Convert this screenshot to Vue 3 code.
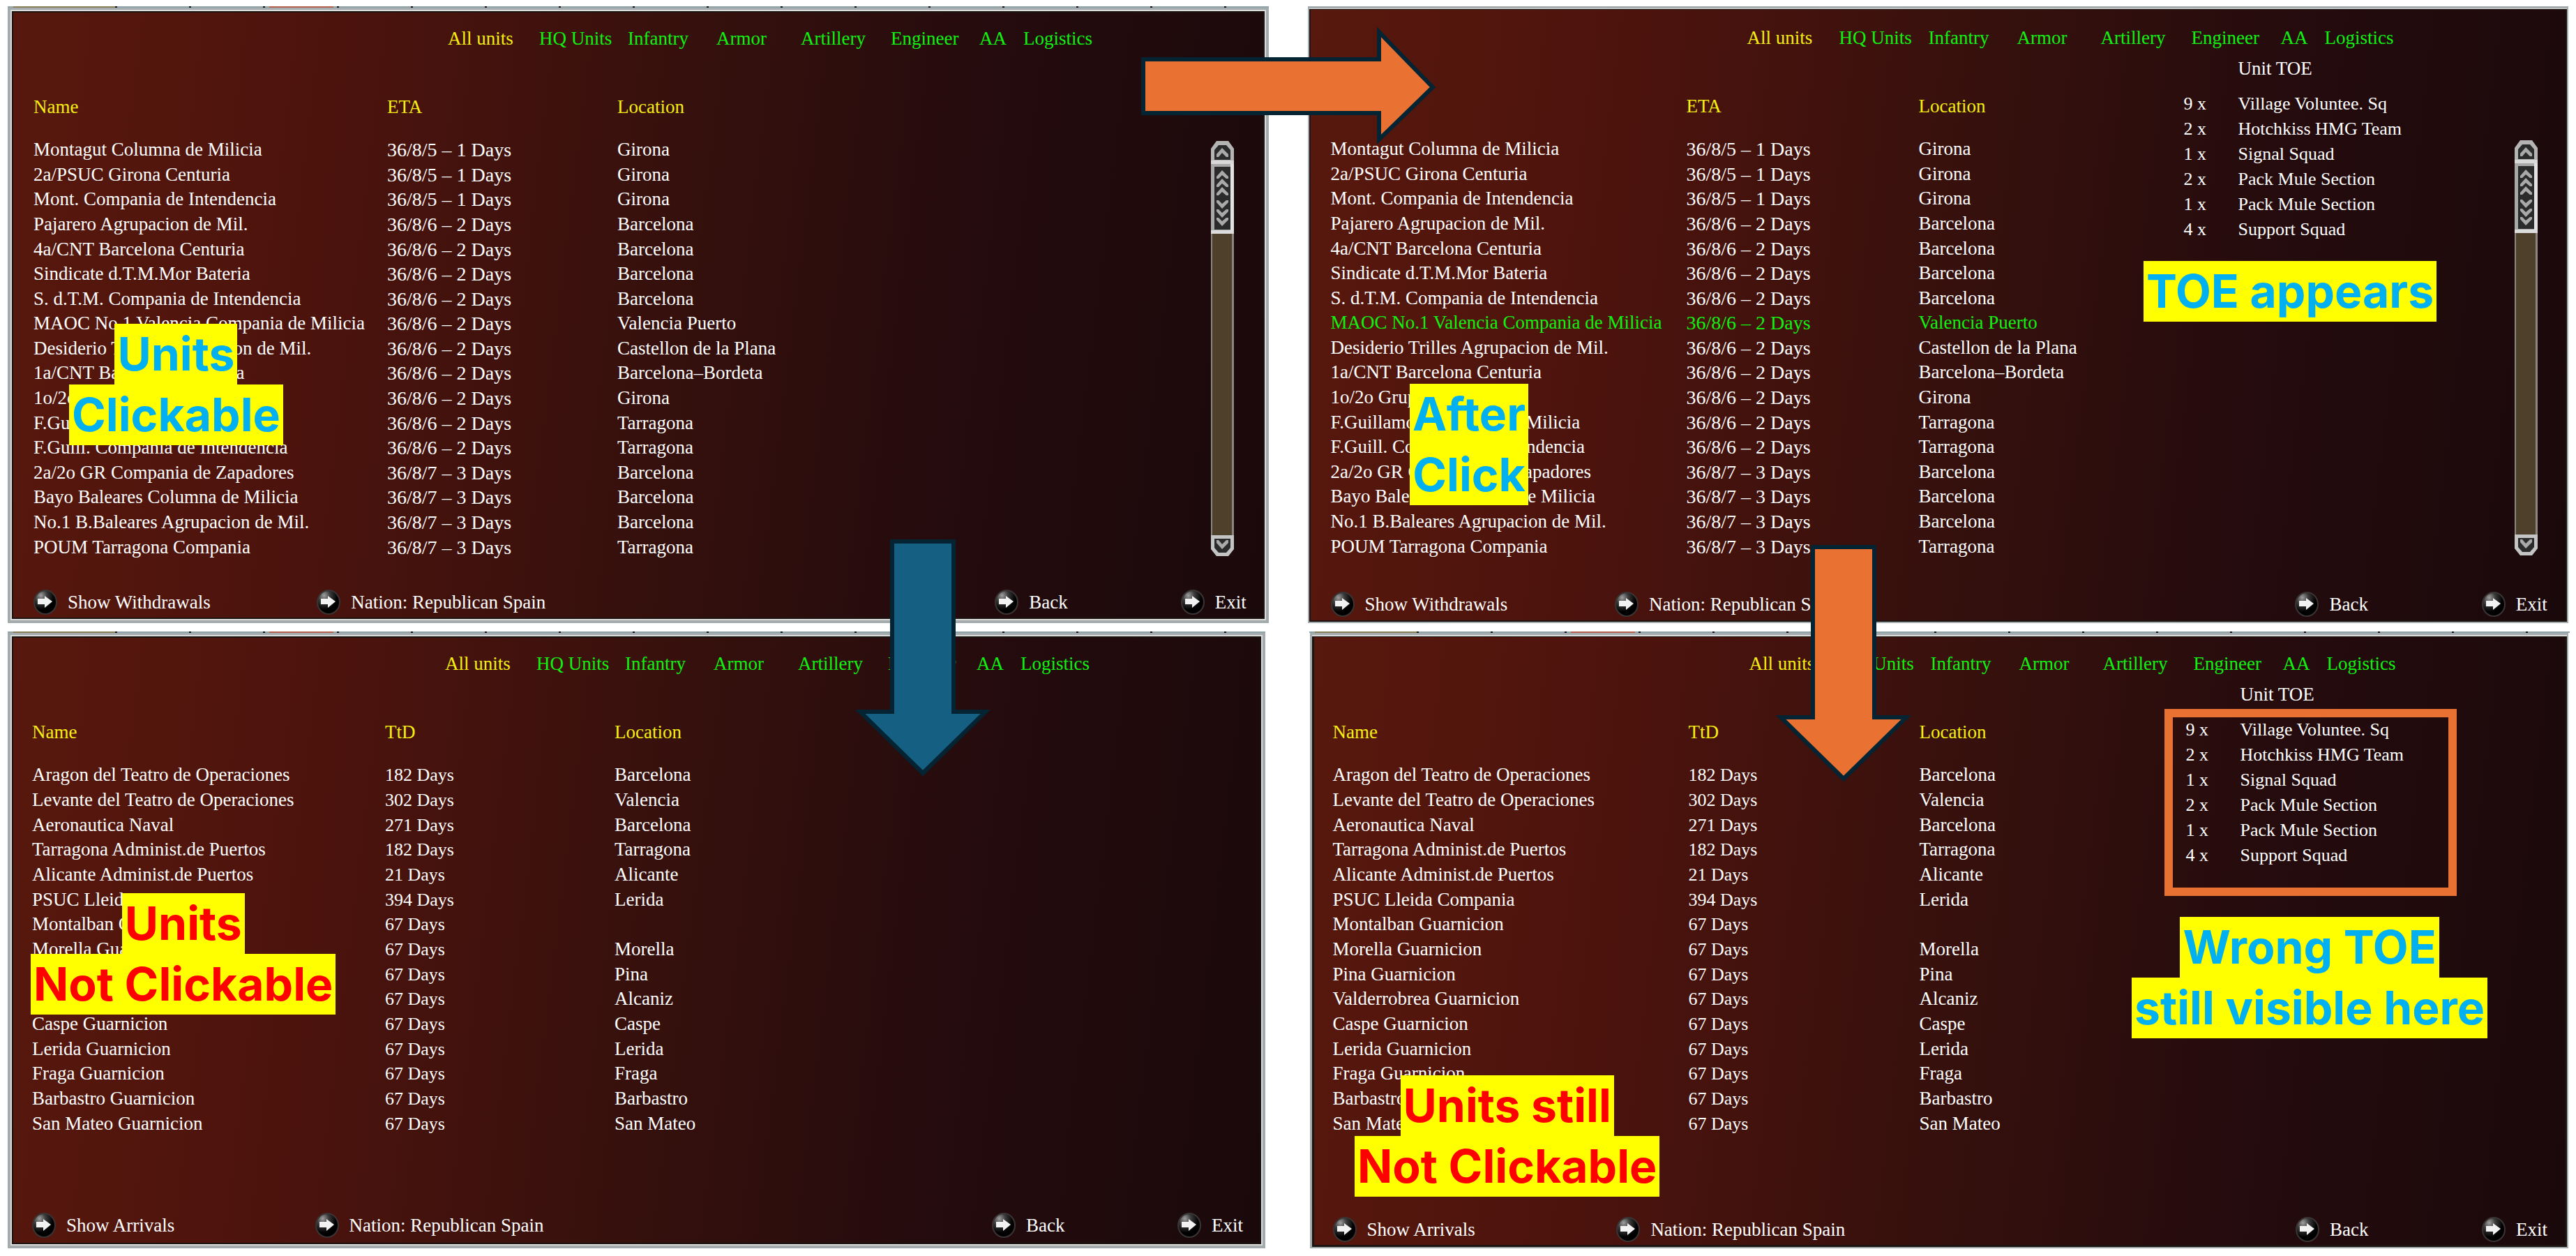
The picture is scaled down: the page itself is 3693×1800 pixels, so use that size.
<script setup>
const tabs = ['All units', 'HQ Units', 'Infantry', 'Armor', 'Artillery', 'Engineer', 'AA', 'Logistics']

const arrivals = [
  ['Montagut Columna de Milicia', '36/8/5 – 1 Days', 'Girona'],
  ['2a/PSUC Girona Centuria', '36/8/5 – 1 Days', 'Girona'],
  ['Mont. Compania de Intendencia', '36/8/5 – 1 Days', 'Girona'],
  ['Pajarero Agrupacion de Mil.', '36/8/6 – 2 Days', 'Barcelona'],
  ['4a/CNT Barcelona Centuria', '36/8/6 – 2 Days', 'Barcelona'],
  ['Sindicate d.T.M.Mor Bateria', '36/8/6 – 2 Days', 'Barcelona'],
  ['S. d.T.M. Compania de Intendencia', '36/8/6 – 2 Days', 'Barcelona'],
  ['MAOC No.1 Valencia Compania de Milicia', '36/8/6 – 2 Days', 'Valencia Puerto'],
  ['Desiderio Trilles Agrupacion de Mil.', '36/8/6 – 2 Days', 'Castellon de la Plana'],
  ['1a/CNT Barcelona Centuria', '36/8/6 – 2 Days', 'Barcelona–Bordeta'],
  ['1o/2o Grupo', '36/8/6 – 2 Days', 'Girona'],
  ['F.Guillamon Columna de Milicia', '36/8/6 – 2 Days', 'Tarragona'],
  ['F.Guill. Compania de Intendencia', '36/8/6 – 2 Days', 'Tarragona'],
  ['2a/2o GR Compania de Zapadores', '36/8/7 – 3 Days', 'Barcelona'],
  ['Bayo Baleares Columna de Milicia', '36/8/7 – 3 Days', 'Barcelona'],
  ['No.1 B.Baleares Agrupacion de Mil.', '36/8/7 – 3 Days', 'Barcelona'],
  ['POUM Tarragona Compania', '36/8/7 – 3 Days', 'Tarragona'],
]

const withdrawals = [
  ['Aragon del Teatro de Operaciones', '182 Days', 'Barcelona'],
  ['Levante del Teatro de Operaciones', '302 Days', 'Valencia'],
  ['Aeronautica Naval', '271 Days', 'Barcelona'],
  ['Tarragona Administ.de Puertos', '182 Days', 'Tarragona'],
  ['Alicante Administ.de Puertos', '21 Days', 'Alicante'],
  ['PSUC Lleida Compania', '394 Days', 'Lerida'],
  ['Montalban Guarnicion', '67 Days', ''],
  ['Morella Guarnicion', '67 Days', 'Morella'],
  ['Pina Guarnicion', '67 Days', 'Pina'],
  ['Valderrobrea Guarnicion', '67 Days', 'Alcaniz'],
  ['Caspe Guarnicion', '67 Days', 'Caspe'],
  ['Lerida Guarnicion', '67 Days', 'Lerida'],
  ['Fraga Guarnicion', '67 Days', 'Fraga'],
  ['Barbastro Guarnicion', '67 Days', 'Barbastro'],
  ['San Mateo Guarnicion', '67 Days', 'San Mateo'],
]

const toe = [
  ['9 x', 'Village Voluntee. Sq'],
  ['2 x', 'Hotchkiss HMG Team'],
  ['1 x', 'Signal Squad'],
  ['2 x', 'Pack Mule Section'],
  ['1 x', 'Pack Mule Section'],
  ['4 x', 'Support Squad'],
]

const panels = [
  { id: 'arrivals', kind: 'eta', when: 'ETA', rows: arrivals, selected: -1, toe: false, scroll: true, map: true, toggle: 'Show Withdrawals' },
  { id: 'arrivals-selected', kind: 'eta', when: 'ETA', rows: arrivals, selected: 7, toe: true, scroll: true, map: false, toggle: 'Show Withdrawals' },
  { id: 'withdrawals', kind: 'ttd', when: 'TtD', rows: withdrawals, selected: -1, toe: false, scroll: false, map: true, toggle: 'Show Arrivals' },
  { id: 'withdrawals-stale', kind: 'ttd', when: 'TtD', rows: withdrawals, selected: -1, toe: true, scroll: false, map: true, toggle: 'Show Arrivals' },
]

const notes = [
  { id: 'clickable', tone: 'info', lines: ['Units', 'Clickable'] },
  { id: 'after', tone: 'info', lines: ['After', 'Click'] },
  { id: 'appears', tone: 'info', lines: ['TOE appears'] },
  { id: 'not-clickable', tone: 'alert', lines: ['Units', 'Not Clickable'] },
  { id: 'still-not', tone: 'alert', lines: ['Units still', 'Not Clickable'] },
  { id: 'wrong', tone: 'info', lines: ['Wrong TOE', 'still visible here'] },
]
</script>

<template>
  <main class="board">
    <section v-for="p in panels" :key="p.id" class="panel" :class="[p.id, p.kind]">
      <div v-if="p.map" class="map-edge"></div>
      <nav class="tabs">
        <button v-for="(t, i) in tabs" :key="t" type="button" class="tab" :class="{ active: i === 0 }">{{ t }}</button>
      </nav>

      <div class="body">
        <div class="list">
          <table class="units">
            <colgroup>
              <col class="col-name" />
              <col class="col-when" />
              <col />
            </colgroup>
            <thead>
              <tr>
                <th scope="col">Name</th>
                <th scope="col">{{ p.when }}</th>
                <th scope="col">Location</th>
              </tr>
            </thead>
            <tbody>
              <tr v-for="(r, i) in p.rows" :key="r[0]" :class="{ selected: i === p.selected }">
                <td>{{ r[0] }}</td>
                <td class="when">{{ r[1] }}</td>
                <td>{{ r[2] }}</td>
              </tr>
            </tbody>
          </table>
        </div>

        <aside class="toe">
          <template v-if="p.toe">
            <h2>Unit TOE</h2>
            <ul>
              <li v-for="(t, i) in toe" :key="i"><span class="qty">{{ t[0] }}</span><span>{{ t[1] }}</span></li>
            </ul>
          </template>
        </aside>

        <div v-if="p.scroll" class="scrollbar">
          <button type="button" class="scroll-btn" aria-label="Scroll up">
            <svg viewBox="0 0 33 28" preserveAspectRatio="none">
              <path d="M0 28V11L8 0H25L33 11V28Z" fill="#b4b4b4" />
              <path d="M5 27V13L11 6H22L28 13V27Z" fill="#2b2b2b" />
              <path d="M16 10L25 19V23H22L16 17L11 23H8V19Z" fill="#a9a9a9" />
            </svg>
          </button>
          <div class="thumb">
            <svg viewBox="0 0 33 105" preserveAspectRatio="none">
              <rect width="33" height="105" fill="#a8a8a8" />
              <rect x="28" width="5" height="105" fill="#e2e2e2" />
              <rect width="33" height="5" fill="#d8d8d8" />
              <rect y="100" width="33" height="5" fill="#dcdcdc" />
              <rect x="5" y="9" width="23" height="90" fill="#2b2b2b" />
              <g fill="#a9a9a9">
                <path v-for="y in [14, 26, 38]" :key="y" :d="`M16 ${y}L25 ${y + 9}V${y + 12}H22L16 ${y + 7}L11 ${y + 12}H8V${y + 9}Z`" />
                <path v-for="y in [69, 82, 94]" :key="y" :d="`M16 ${y}L25 ${y - 9}V${y - 12}H22L16 ${y - 7}L11 ${y - 12}H8V${y - 9}Z`" />
              </g>
            </svg>
          </div>
          <div class="track"></div>
          <button type="button" class="scroll-btn" aria-label="Scroll down">
            <svg viewBox="0 0 33 30" preserveAspectRatio="none">
              <path d="M0 0V20L8 30H25L33 20V0Z" fill="#c4c4c4" />
              <path d="M5 5V18L11 25H22L28 18V5Z" fill="#2b2b2b" />
              <path d="M16 20L25 11V7H22L16 13L11 7H8V11Z" fill="#a9a9a9" />
            </svg>
          </button>
        </div>
      </div>

      <footer class="actions">
        <button v-for="a in [p.toggle, 'Nation: Republican Spain', 'Back', 'Exit']" :key="a" type="button" class="action">
          <svg class="orb" viewBox="0 0 34 36">
            <defs>
              <radialGradient :id="`orb-${p.id}`" cx="0.3" cy="0.22" r="0.6">
                <stop offset="0" stop-color="#a0a0a0" />
                <stop offset="0.45" stop-color="#3c3c3c" />
                <stop offset="1" stop-color="#000" />
              </radialGradient>
            </defs>
            <ellipse cx="17" cy="18" rx="16" ry="17" :fill="`url(#orb-${p.id})`" stroke="#3a3434" stroke-width="2" />
            <path d="M6 13H16V9L27 17L16 26V21H6Z" fill="#f2f2f2" />
          </svg>
          <span>{{ a }}</span>
        </button>
      </footer>
    </section>

    <svg class="arrow arrow-right" viewBox="0 0 424 174">
      <path d="M4 47H342V8L419 87L342 162V124H4Z" />
    </svg>
    <svg class="arrow arrow-down blue" viewBox="0 0 194 344">
      <path d="M53 4H141V248H187L97 336L7 248H53Z" />
    </svg>
    <svg class="arrow arrow-down orange" viewBox="0 0 194 344">
      <path d="M53 4H141V248H187L97 336L7 248H53Z" />
    </svg>

    <div class="frame"></div>

    <p v-for="n in notes" :key="n.id" class="note" :class="[n.id, n.tone]">
      <span v-for="l in n.lines" :key="l">{{ l }}</span>
    </p>
  </main>
</template>

<style>
body {
  margin: 0;
  background: #fff;
}
</style>

<style scoped>
.board {
  position: relative;
  display: grid;
  grid-template-columns: 1fr 1fr;
  gap: 12px 56px;
  padding: 9px 11px 12px;
  font-family: "Liberation Serif", "Times New Roman", serif;
  font-size: 27px;
  color: #fff;
}

.panel {
  --when: 507px;
  --place: 330px;
  --tabs: 887px;
  --rows: 666px;
  position: relative;
  box-sizing: border-box;
  display: flex;
  flex-direction: column;
  min-height: 884px;
  padding: 25px 0 8px 33px;
  border: 4px solid #a3abad;
  border-width: 5px 4px 4px 4px;
  background: linear-gradient(97deg, #58180d 0%, #4b130d 27%, #34100d 54%, #240b0d 76%, #1a090c 100%);
  box-shadow: inset 0 0 0 2px #dcdcdc, inset 0 0 0 4px #1b1411;
}
.arrivals-selected {
  --when: 510px;
  --place: 333px;
  --tabs: 891px;
  padding: 26px 0 7px 31px;
  border-width: 3px 2px 2px 2px;
  box-shadow: inset 0 1px #dcdcdc, inset 0 0 0 2px #1b1411;
}
.withdrawals {
  --when: 506px;
  --place: 329px;
  margin-right: 5px;
  padding: 25px 0 11px 31px;
}
.withdrawals-stale {
  --when: 510px;
  --place: 331px;
  margin-left: 3px;
  padding: 25px 0 7px 30px;
  border-width: 5px 2px 2px 3px;
  box-shadow: inset 0 2px #dcdcdc, inset 0 0 0 3px #1b1411;
}
.ttd {
  --rows: 596px;
}

/* sliver of the map that shows above the window */
.map-edge {
  position: absolute;
  top: -5px;
  left: -4px;
  right: -4px;
  height: 2px;
  background:
    linear-gradient(#b8604f, #b8604f) 375px 0 / 92px 2px no-repeat,
    linear-gradient(#8a8058, #8a8058) 8px 0 / 146px 2px no-repeat,
    repeating-linear-gradient(90deg, transparent 0 48px, #111 48px 51px, transparent 51px 106px),
    #8fa3aa;
}

button {
  margin: 0;
  padding: 0;
  border: 0;
  background: none;
  color: inherit;
  font: inherit;
  cursor: pointer;
}

.tabs {
  display: grid;
  grid-template-columns: 131px 127px 127px 121px 129px 127px 63px auto;
  justify-content: start;
  margin-left: 594px;
}
.arrivals-selected .tabs,
.withdrawals-stale .tabs {
  grid-template-columns: 132px 128px 127px 120px 130px 128px 63px auto;
  margin-left: 597px;
}
.withdrawals .tabs {
  margin-left: 592px;
}
.tab {
  text-align: left;
  line-height: 32px;
  white-space: nowrap;
  color: #12f012;
}
.tab.active {
  color: #f5ee14;
}

.body {
  display: flex;
  align-items: flex-start;
}
.list {
  flex: 0 0 1220px;
  margin-top: 65px;
}
.units {
  width: 100%;
  height: var(--rows);
  table-layout: fixed;
  border-collapse: collapse;
}
.col-name {
  width: var(--when);
}
.col-when {
  width: var(--place);
}
th,
td {
  padding: 0;
  text-align: left;
  line-height: 35px;
  white-space: nowrap;
}
th {
  height: 61px;
  vertical-align: top;
  font-weight: 400;
  color: #f5ee14;
}
.eta .when {
  font-size: 28px;
}
.ttd .when {
  font-size: 26px;
}
.selected {
  color: #12f012;
}

.toe {
  flex: 1;
  margin-top: 10px;
  padding-left: 3px;
  font-size: 26px;
}
.toe h2 {
  margin: 0 0 15px 78px;
  font-size: 27px;
  font-weight: 400;
  line-height: 36px;
}
.toe ul {
  margin: 0;
  padding: 0;
  list-style: none;
}
.toe li {
  display: flex;
  line-height: 36px;
}
.qty {
  flex: 0 0 78px;
}

.scrollbar {
  display: flex;
  flex-direction: column;
  flex: 0 0 33px;
  height: 595px;
  margin: 131px 46px 0 0;
}
.arrivals-selected .scrollbar {
  margin-right: 42px;
}
.scrollbar svg {
  display: block;
  width: 100%;
}
.track {
  flex: 1;
  border: solid #8c8680;
  border-width: 0 3px 0 2px;
  background: #4e402a;
}

.actions {
  display: grid;
  grid-template-columns: 407fr 974fr 267fr 122fr;
  margin-top: auto;
}
.action {
  display: flex;
  align-items: center;
  gap: 15px;
  line-height: 36px;
  white-space: nowrap;
}
.orb {
  width: 34px;
  height: 36px;
}

.arrow {
  position: absolute;
  fill: #e97132;
  stroke: #042433;
  stroke-width: 6px;
  stroke-miterlimit: 8;
}
.arrow-right {
  top: 38px;
  left: 1635px;
  width: 424px;
  height: 174px;
}
.arrow-down {
  width: 194px;
  height: 344px;
}
.blue {
  top: 772px;
  left: 1226px;
  fill: #156082;
}
.orange {
  top: 780px;
  left: 2546px;
}

.frame {
  position: absolute;
  top: 1016px;
  left: 3103px;
  box-sizing: border-box;
  width: 419px;
  height: 268px;
  border: 12px solid #e97132;
}

.note {
  position: absolute;
  display: flex;
  flex-direction: column;
  align-items: center;
  margin: 0;
  font-family: Inter, "Open Sans", sans-serif;
  font-size: 66px;
  font-weight: 700;
  line-height: 87px;
  white-space: nowrap;
}
.note span {
  padding: 0 4px;
  background: #ff0;
}
.info {
  color: #00b0f0;
}
.alert {
  color: #f00;
}
.clickable {
  top: 464px;
  left: 99px;
}
.after {
  top: 550px;
  left: 2021px;
}
.appears {
  top: 374px;
  left: 3073px;
}
.not-clickable {
  top: 1280px;
  left: 44px;
}
.still-not {
  top: 1541px;
  left: 1942px;
}
.wrong {
  top: 1314px;
  left: 3056px;
}
</style>
